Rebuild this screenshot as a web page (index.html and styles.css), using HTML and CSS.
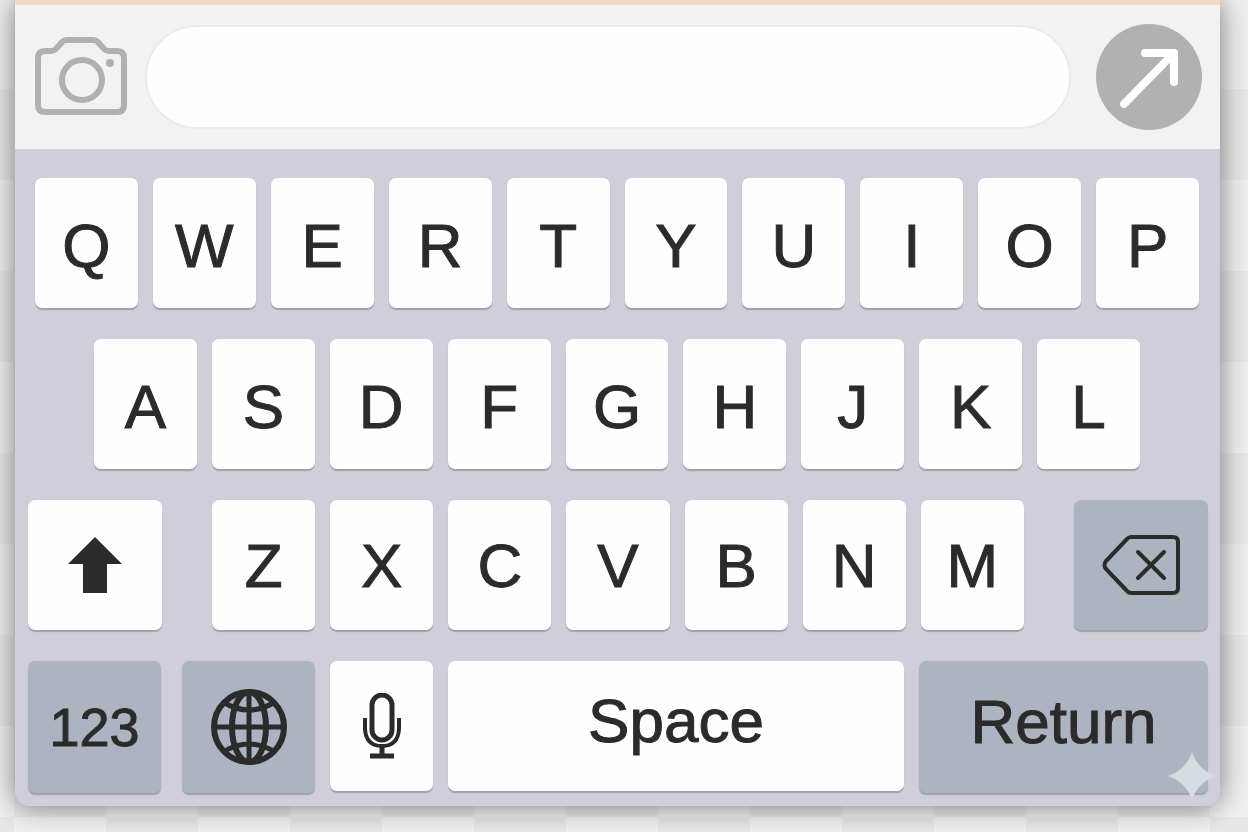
FILE: index.html
```
<!DOCTYPE html>
<html lang="en">

<head>
    <meta charset="utf-8">
    <title>Keyboard</title>
    <link rel="stylesheet" href="styles.css">
</head>

<body>
    <div class="panel">
        <div class="toolbar">
            <button class="camera" type="button" aria-label="Camera">
                <svg width="92" height="80" viewBox="0 0 92 80" fill="none" stroke="#b0b0b0" stroke-width="6">
                    <path d="M10 14H16Q19 14 21 12L27 5Q29 3 32 3H58Q61 3 63 5L69 12Q71 14 74 14H82Q89 14 89 21V68Q89 75 82 75H10Q3 75 3 68V21Q3 14 10 14Z"/>
                    <circle cx="47" cy="43" r="20"/>
                    <circle cx="75" cy="26" r="4" fill="#b0b0b0" stroke="none"/>
                </svg>
            </button>
            <input class="message" type="text" aria-label="Message">
            <button class="send" type="button" aria-label="Send">
                <svg width="106" height="106" viewBox="0 0 106 106" fill="none" stroke="#fff" stroke-width="8" stroke-linecap="round" stroke-linejoin="round">
                    <path d="M28 80L77 30M49 29H78V58"/>
                </svg>
            </button>
        </div>
        <div class="keyboard">
            <div class="row row-top">
                <button class="key" type="button">Q</button>
                <button class="key" type="button">W</button>
                <button class="key" type="button">E</button>
                <button class="key" type="button">R</button>
                <button class="key" type="button">T</button>
                <button class="key" type="button">Y</button>
                <button class="key" type="button">U</button>
                <button class="key" type="button">I</button>
                <button class="key" type="button">O</button>
                <button class="key" type="button">P</button>
            </div>
            <div class="row row-home">
                <button class="key" type="button">A</button>
                <button class="key" type="button">S</button>
                <button class="key" type="button">D</button>
                <button class="key" type="button">F</button>
                <button class="key" type="button">G</button>
                <button class="key" type="button">H</button>
                <button class="key" type="button">J</button>
                <button class="key" type="button">K</button>
                <button class="key" type="button">L</button>
            </div>
            <div class="row-shift">
                <button class="key" type="button" aria-label="Shift">
                    <svg width="54" height="56" viewBox="0 0 54 56" fill="#2b2b2b">
                        <path d="M27 0L54 27H39V56H15V27H0Z"/>
                    </svg>
                </button>
                <div class="row">
                    <button class="key" type="button">Z</button>
                    <button class="key" type="button">X</button>
                    <button class="key" type="button">C</button>
                    <button class="key" type="button">V</button>
                    <button class="key" type="button">B</button>
                    <button class="key" type="button">N</button>
                    <button class="key" type="button">M</button>
                </div>
                <button class="key dark" type="button" aria-label="Delete">
                    <svg width="78" height="60" viewBox="0 0 78 60" fill="none" stroke="#2b2b2b" stroke-width="4" stroke-linecap="round">
                        <path d="M29 2H71Q76 2 76 7V53Q76 58 71 58H29Q27 58 25 56L4 34Q1 30 4 26L25 4Q27 2 29 2Z"/>
                        <path d="M36 17L62 43M62 17L36 43"/>
                    </svg>
                </button>
            </div>
            <div class="row-bottom">
                <button class="key dark numbers" type="button">123</button>
                <button class="key dark globe" type="button" aria-label="Next keyboard">
                    <svg width="76" height="76" viewBox="0 0 76 76" fill="none" stroke="#2b2b2b" stroke-width="6">
                        <circle cx="38" cy="38" r="35"/>
                        <ellipse cx="38" cy="38" rx="17" ry="35"/>
                        <path d="M38 3V73M3 38H73M12 13Q38 29 64 13M12 63Q38 47 64 63" stroke-width="5"/>
                    </svg>
                </button>
                <button class="key" type="button" aria-label="Dictation">
                    <svg width="40" height="66" viewBox="0 0 40 66" fill="none" stroke="#2b2b2b" stroke-width="5">
                        <rect x="10" y="2" width="20" height="45" rx="10"/>
                        <path d="M3 25V36Q4 53 20 53Q36 53 37 36V25" stroke-width="4"/>
                        <path d="M20 53V62M8 63H32"/>
                    </svg>
                </button>
                <button class="key word" type="button">Space</button>
                <button class="key dark word" type="button">Return</button>
            </div>
        </div>
        <svg class="sparkle" width="48" height="48" viewBox="0 0 48 48" fill="#d6dae1">
            <path d="M24 0Q30 18 48 24Q30 30 24 48Q18 30 0 24Q18 18 24 0Z"/>
        </svg>
    </div>
</body>

</html>
```
FILE: styles.css
```
*{
    padding: 0;
    margin: 0;
    box-sizing: border-box;
}
body{
    min-height: 100vh;
    padding: 0 28px 26px 15px;
    font-family: "Liberation Sans", Arial, sans-serif;
    color: #2b2b2b;
    background: repeating-conic-gradient(#e8e8e8 0 25%, #f0f0f0 0 50%) 14px 89px / 184px 182px;
}
button{
    border: none;
    font-family: inherit;
    color: inherit;
}
svg{
    display: block;
}
.panel{
    position: relative;
    border-top: 5px solid #f0d9c9;
    border-radius: 0 0 14px 14px;
    background-color: #cfced9;
    box-shadow: 0 0 28px rgba(0, 0, 0, 0.5);
}
.toolbar{
    display: flex;
    align-items: center;
    height: 144px;
    padding: 0 18px 0 20px;
    background-color: #f2f2f2;
}
.camera{
    background: none;
}
.message{
    flex: 1;
    min-width: 0;
    height: 104px;
    margin: 0 25px 0 18px;
    padding: 0 44px;
    border: 2px solid #ebebeb;
    border-radius: 52px;
    background-color: #fefefe;
    font-size: 48px;
    font-family: inherit;
}
.send{
    border-radius: 50%;
    background-color: #b1b1b1;
}

/* 按键区 */
.keyboard{
    display: flex;
    flex-direction: column;
    gap: 31px;
    padding: 29px 12px 13px 13px;
}
.row{
    display: flex;
    gap: 15px;
}
.row .key{
    flex: 1;
    min-width: 0;
}
.row-top{
    padding: 0 9px 0 7px;
}
.row-home{
    padding: 0 68px 0 66px;
}
.row-top .key,
.row-home .key{
    padding-top: 4px;
}
.row-shift{
    display: grid;
    grid-template-columns: 134fr 811fr 134fr;
    gap: 50px;
}
.row-bottom{
    display: grid;
    grid-template-columns: 136fr 136fr 103fr 456fr 289fr;
    gap: 15px;
}
.row-bottom .numbers{
    margin-right: 3px;
}
.row-bottom .globe{
    margin-left: 3px;
}
.key{
    display: flex;
    align-items: center;
    justify-content: center;
    height: 130px;
    border-radius: 7px;
    background-color: #fefefe;
    box-shadow: 0 2px 1px #a0a0ad;
    font-size: 62px;
    -webkit-text-stroke: 1px #2b2b2b;
}
.dark{
    background-color: #adb4c0;
    box-shadow: 0 2px 1px #9ea2b0;
}
.row-bottom .dark{
    height: 132px;
}
.row-bottom .numbers{
    font-size: 54px;
}
.word{
    padding-bottom: 12px;
}
.sparkle{
    position: absolute;
    right: 4px;
    bottom: 6px;
}
```
